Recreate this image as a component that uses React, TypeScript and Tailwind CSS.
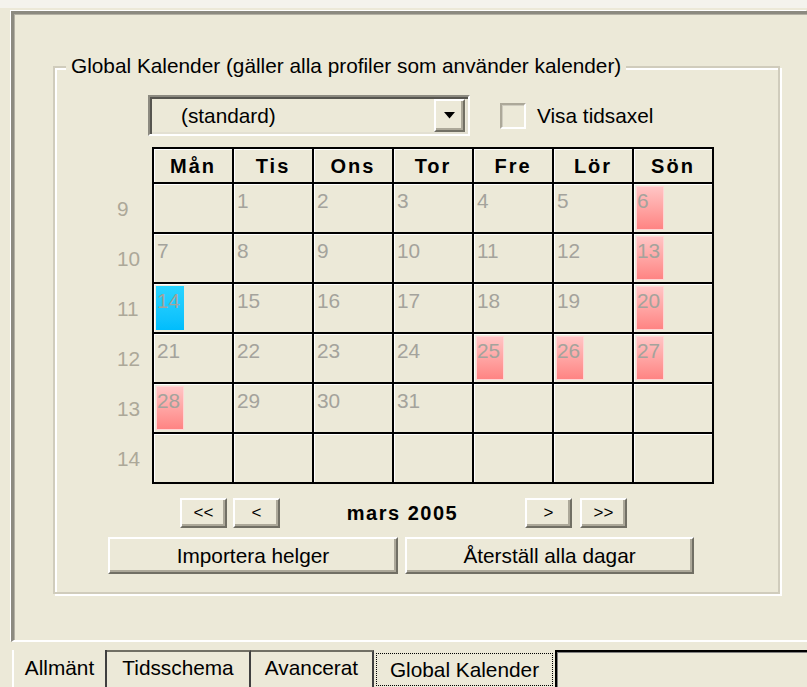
import React from "react";

const raised =
  "border-2 border-t-white border-l-white border-r-[#716f64] border-b-[#716f64] shadow-[inset_-2px_-2px_0_#aca899] bg-[#ece9d8]";

const HEAD = ["Mån", "Tis", "Ons", "Tor", "Fre", "Lör", "Sön"];
const WEEKS = [9, 10, 11, 12, 13, 14];
const ROWS: (number | null)[][] = [
  [null, 1, 2, 3, 4, 5, 6],
  [7, 8, 9, 10, 11, 12, 13],
  [14, 15, 16, 17, 18, 19, 20],
  [21, 22, 23, 24, 25, 26, 27],
  [28, 29, 30, 31, null, null, null],
  [null, null, null, null, null, null, null],
];
const PINK = new Set([6, 13, 20, 25, 26, 27, 28]);
const BLUE = new Set([14]);

function DayCell({ d }: { d: number | null }) {
  let block = "";
  if (d !== null && PINK.has(d))
    block = "bg-gradient-to-b from-[#ffc6c6] to-[#ff8282] shadow-[inset_0_0_0_1px_#ffd4d4]";
  if (d !== null && BLUE.has(d))
    block = "bg-gradient-to-b from-[#2ad4ff] to-[#00bdfc]";
  return (
    <div className="h-[50px] w-[80px] border-r-2 border-b-2 border-black shadow-[inset_1px_1px_0_#fff] p-[2px]">
      {d !== null && (
        <div className={`w-[28px] h-[44px] pl-[1px] pt-[3px] leading-[24px] text-[#a4a39c] ${block}`}>{d}</div>
      )}
    </div>
  );
}

export default function App() {
  return (
    <div className="w-[807px] h-[687px] bg-[#ece9d8] overflow-hidden flex flex-col font-['Liberation_Sans',Arial,sans-serif] text-[20.8px] leading-[24px] text-black">
      <div className="h-[8px] flex-none bg-[#f4f3ed]" />
      {/* tab page panel */}
      <div className="ml-[11px] mt-[3px] h-[631px] flex-none border-t-[3px] border-l-[3px] border-t-[#8c8a80] border-l-[#8c8a80] border-b-2 border-b-white shadow-[-1px_-1px_0_#fff,inset_1px_1px_0_#b3b0a3]">
        {/* group box */}
        <div className="ml-[39px] mt-[52px] w-[727px] h-[528px] border-2 border-[#d0ccbc] shadow-[inset_2px_2px_0_#fff,2px_2px_0_#fff]">
          <div className="-mt-[14px] ml-[11px] px-[5px] w-fit bg-[#ece9d8]">
            Global Kalender (gäller alla profiler som använder kalender)
          </div>

          {/* dropdown + checkbox */}
          <div className="flex items-center mt-[17px]">
            <div className="ml-[93px] w-[322px] h-[41px] flex items-center border-2 border-t-[#8c8a80] border-l-[#8c8a80] border-b-white border-r-white shadow-[inset_2px_2px_0_#56554f,inset_-2px_-2px_0_#e3e0d2]">
              <div className="flex-1 pl-[31px]">(standard)</div>
              <div className={`w-[31px] h-[33px] mr-[3px] flex items-center justify-center ${raised}`}>
                <svg width="11" height="7" viewBox="0 0 11 7">
                  <path d="M0 0 H11 L5.5 6.5 Z" fill="#000" />
                </svg>
              </div>
            </div>
            <div className="ml-[30px] w-[26px] h-[26px] border-2 border-t-[#aca899] border-l-[#aca899] border-b-white border-r-white shadow-[inset_1px_1px_0_#cfccbf]" />
            <div className="ml-[11px]">Visa tidsaxel</div>
          </div>

          {/* calendar */}
          <div className="flex mt-[11px]">
            <div className="ml-[62px] w-[35px] pt-[37px] flex flex-col">
              {WEEKS.map((w) => (
                <div key={w} className="h-[50px] flex items-center text-[#aca899]">
                  {w}
                </div>
              ))}
            </div>
            <div className="grid grid-cols-[repeat(7,80px)] border-l-2 border-t-2 border-black">
              {HEAD.map((h) => (
                <div
                  key={h}
                  className="h-[35px] border-r-2 border-b-2 border-black shadow-[inset_1px_1px_0_#fff] flex items-center justify-center font-bold text-[20px] tracking-[2px]"
                >
                  {h}
                </div>
              ))}
              {ROWS.map((r, i) => r.map((d, j) => <DayCell key={`${i}-${j}`} d={d} />))}
            </div>
          </div>

          {/* month nav */}
          <div className="flex items-center mt-[14px]">
            <div className={`ml-[125px] w-[47px] h-[30px] flex items-center justify-center text-[17px] ${raised}`}>&lt;&lt;</div>
            <div className={`ml-[6px] w-[47px] h-[30px] flex items-center justify-center text-[17px] ${raised}`}>&lt;</div>
            <div className="w-[245px] text-center font-bold text-[20px] tracking-[1.5px]">mars 2005</div>
            <div className={`w-[47px] h-[30px] flex items-center justify-center text-[17px] ${raised}`}>&gt;</div>
            <div className={`ml-[8px] w-[47px] h-[30px] flex items-center justify-center text-[17px] ${raised}`}>&gt;&gt;</div>
          </div>

          {/* action buttons */}
          <div className="flex mt-[9px]">
            <div className={`ml-[53px] w-[290px] h-[37px] flex items-center justify-center ${raised}`}>Importera helger</div>
            <div className={`ml-[7px] w-[289px] h-[37px] flex items-center justify-center ${raised}`}>Återställ alla dagar</div>
          </div>
        </div>
      </div>

      {/* tabs */}
      <div className="flex mt-[8px] h-[40px] pl-[12px]">
        <div className="w-[95px] border-l-2 border-l-white border-r-2 border-r-[#404040] pt-[6px] text-center">Allmänt</div>
        <div className="w-[144px] border-r-2 border-r-[#404040] border-t-2 border-t-[#716f64] pt-[4px] text-center">Tidsschema</div>
        <div className="w-[123px] border-r-2 border-r-[#404040] border-t-2 border-t-[#716f64] pt-[4px] text-center">Avancerat</div>
        <div className="w-[181px] px-[2px] pt-[3px]">
          <div className="h-[33px] border border-dotted border-black flex items-center justify-center">Global Kalender</div>
        </div>
        <div className="flex-1 border-t-2 border-l-2 border-black shadow-[inset_1px_1px_0_#808080]" />
      </div>
    </div>
  );
}
